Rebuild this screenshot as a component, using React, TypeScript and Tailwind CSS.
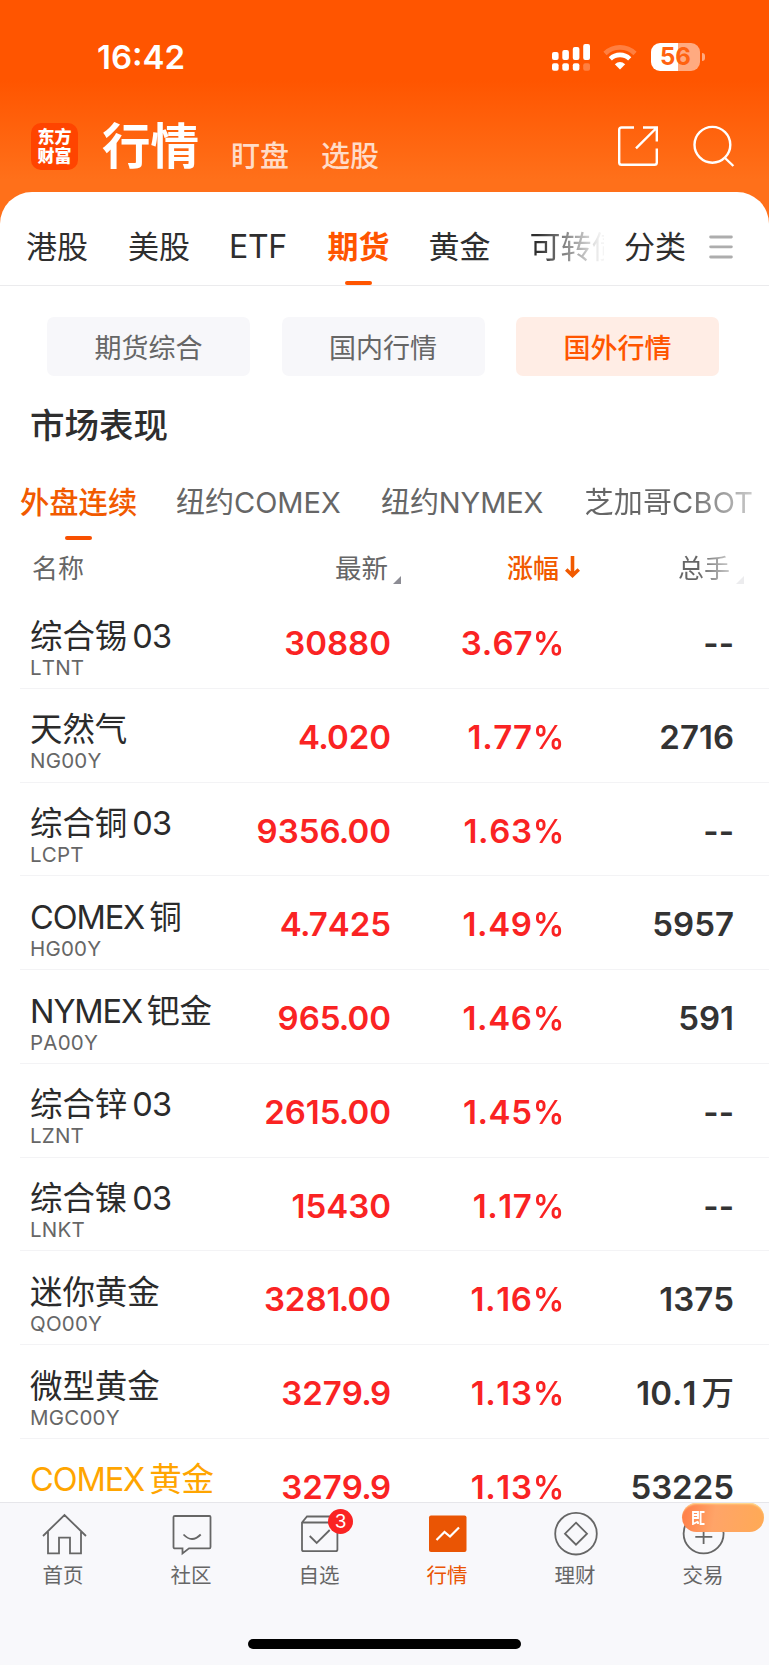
import React from "react";

const rows = [
  { name: "综合锡", tail: "03", code: "LTNT", price: "30880", pct: "3.67%", vol: "--" },
  { name: "天然气", code: "NG00Y", price: "4.020", pct: "1.77%", vol: "2716" },
  { name: "综合铜", tail: "03", code: "LCPT", price: "9356.00", pct: "1.63%", vol: "--" },
  { lead: "COMEX", name: "铜", code: "HG00Y", price: "4.7425", pct: "1.49%", vol: "5957" },
  { lead: "NYMEX", name: "钯金", code: "PA00Y", price: "965.00", pct: "1.46%", vol: "591" },
  { name: "综合锌", tail: "03", code: "LZNT", price: "2615.00", pct: "1.45%", vol: "--" },
  { name: "综合镍", tail: "03", code: "LNKT", price: "15430", pct: "1.17%", vol: "--" },
  { name: "迷你黄金", code: "QO00Y", price: "3281.00", pct: "1.16%", vol: "1375" },
  { name: "微型黄金", code: "MGC00Y", price: "3279.9", pct: "1.13%", vol: "10.1", unit: "万" },
  { lead: "COMEX", name: "黄金", price: "3279.9", pct: "1.13%", vol: "53225", held: true },
];

function StatusBar() {
  return (
    <div className="flex h-[115px] items-start pt-[37px] pl-[97px] pr-[69px]">
      <span className="w-[100px] text-[33px] leading-[40px] font-semibold text-white">16:42</span>
      <div className="ml-auto flex pt-[6px]">
        <svg className="h-[29px] w-[40px]" viewBox="0 0 40 29" fill="#fff">
          <rect x="1" y="9" width="6.6" height="8" rx="2" />
          <rect x="11.3" y="7" width="6.6" height="10" rx="2" />
          <rect x="21.8" y="4" width="6.6" height="13" rx="2" />
          <rect x="32.2" y="1" width="6.8" height="16" rx="2" />
          <rect x="1" y="20.3" width="6.6" height="7.4" rx="2" />
          <rect x="11.3" y="20.3" width="6.6" height="7.4" rx="2" />
          <rect x="21.8" y="20.3" width="6.6" height="7.4" rx="2" />
          <rect x="32.2" y="20.3" width="6.8" height="7.4" rx="2" opacity="0.25" />
        </svg>
        <svg className="ml-[12px] h-[29px] w-[34px]" viewBox="0 0 34 29" fill="none" stroke="#fff" strokeWidth="4.6">
          <path d="M2 10.5A21.5 21.5 0 0 1 32 10.5" opacity="0.25" />
          <path d="M7.3 15.8A14 14 0 0 1 26.7 15.8" />
          <path d="M11.8 21.3Q17 16.6 22.2 21.3L17 26.4Z" fill="#fff" stroke="none" />
        </svg>
        <div className="relative ml-[14px] flex h-[28px] w-[49px] items-center justify-center rounded-[9px] bg-[linear-gradient(90deg,#fff_56%,#ffaa80_56%)]">
          <span className="text-[24px] leading-[28px] font-bold text-[#ff6210]">56</span>
          <span className="absolute top-[10px] -right-[5px] h-[8px] w-[3px] rounded-r-full bg-[#ffaa80]" />
        </div>
      </div>
    </div>
  );
}

function TitleBar() {
  return (
    <div className="flex h-[77px] pl-[31px] pr-[34px]">
      <div className="mt-[8px] flex h-[47px] w-[47px] flex-col items-center justify-center rounded-[10px] bg-[#ff4400] text-[17px] leading-[19px] font-black text-white">
        <span>东方</span>
        <span>财富</span>
      </div>
      <span className="ml-[24px] w-[98px] text-[48.5px] leading-[64px] font-bold text-white">行情</span>
      <span className="ml-[31px] w-[60px] pt-[21px] text-[29px] leading-[42px] font-medium text-[#ffdcc8]">盯盘</span>
      <span className="ml-[30px] w-[60px] pt-[21px] text-[29px] leading-[42px] font-medium text-[#ffdcc8]">选股</span>
      <svg className="mt-[10px] ml-auto h-[42px] w-[42px]" viewBox="0 0 42 42" fill="none" stroke="#fff" strokeWidth="2.4">
        <path d="M17 2.5H4.5Q2.2 2.5 2.2 4.8V37.5Q2.2 39.8 4.5 39.8H37.5Q39.8 39.8 39.8 37.5V23.5" />
        <path d="M26 2.5H39.8V16.5M39.4 3L19 23.3" />
      </svg>
      <svg className="mt-[10px] ml-[34px] h-[42px] w-[42px]" viewBox="0 0 42 42" fill="none" stroke="#fff" strokeWidth="2.4">
        <circle cx="19.4" cy="19.8" r="17.9" />
        <path d="M31.5 32.5L40.4 41" />
      </svg>
    </div>
  );
}

function CategoryTabs() {
  return (
    <div className="flex h-[94px] border-b border-[#ebebed] pl-[26px] text-[31px] leading-[44px] text-[#2e2e2e]">
      <div className="flex w-[578px] overflow-hidden whitespace-nowrap pt-[33px]">
        <span className="w-[102px] shrink-0">港股</span>
        <span className="w-[101px] shrink-0">美股</span>
        <span className="w-[98.5px] shrink-0 text-[32px] tracking-[-0.3px]">ETF</span>
        <span className="flex w-[101px] shrink-0 flex-col font-bold text-[#ff5500]">
          期货
          <i className="mt-[12px] ml-[17px] h-[4px] w-[27px] rounded-full bg-[#ff5500]" />
        </span>
        <span className="w-[101px] shrink-0">黄金</span>
        <span className="shrink-0 bg-[linear-gradient(90deg,#2e2e2e_8%,#f4f4f4_76%)] bg-clip-text text-transparent">可转债</span>
      </div>
      <span className="ml-[20px] pt-[33px]">分类</span>
      <svg className="mt-[43px] ml-[23px] h-[24px] w-[24px]" viewBox="0 0 24 24" stroke="#adadad" strokeWidth="2.8" strokeLinecap="round">
        <path d="M1.6 2H22.4M1.6 11.8H22.4M1.6 22H22.4" />
      </svg>
    </div>
  );
}

function Segments() {
  return (
    <div className="mt-[31px] flex h-[59px] gap-[31.5px] pl-[47px] text-center text-[27px] leading-[63px] text-[#666]">
      <span className="w-[203px] rounded-[7px] bg-[#f7f7fa]">期货综合</span>
      <span className="w-[203px] rounded-[7px] bg-[#f7f7fa]">国内行情</span>
      <span className="w-[203px] rounded-[7px] bg-[#ffede5] font-medium text-[#ff5500]">国外行情</span>
    </div>
  );
}

function ExchangeTabs() {
  return (
    <div className="mt-[31px] flex h-[60px] whitespace-nowrap pl-[20px] text-[29px] leading-[44px] text-[#666]">
      <span className="flex w-[156px] shrink-0 flex-col text-[29.3px] font-medium text-[#f15a00]">
        外盘连续
        <i className="mt-[11px] ml-[45px] h-[4px] w-[27px] rounded-full bg-[#f85000]" />
      </span>
      <span className="w-[205px] shrink-0">纽约COMEX</span>
      <span className="w-[203.5px] shrink-0 tracking-[-0.1px]">纽约NYMEX</span>
      <span className="shrink-0 bg-[linear-gradient(90deg,#666_60%,#ccc_100%)] bg-clip-text tracking-[0.2px] text-transparent">芝加哥CBOT</span>
    </div>
  );
}

function TableHead() {
  return (
    <div className="flex h-[54px] pl-[32px] text-[26px] leading-[55px] text-[#666]">
      <span className="w-[303px]">名称</span>
      <span className="text-[26.5px]">最新</span>
      <svg className="mt-[35px] ml-[5px] h-[8px] w-[8px]" viewBox="0 0 8 8" fill="#8c8c94"><path d="M8 0V8H0Z" /></svg>
      <span className="ml-[106px] font-medium text-[#f15a00]">涨幅</span>
      <svg className="mt-[15px] ml-[6px] h-[22px] w-[15px]" viewBox="0 0 15 22" fill="none" stroke="#f15a00" strokeWidth="3.6">
        <path d="M7.5 0V19M1.2 13.5L7.5 19.5L13.8 13.5" />
      </svg>
      <span className="ml-[98px] bg-[linear-gradient(90deg,#666_40%,#ccc_100%)] bg-clip-text text-transparent">总手</span>
      <svg className="mt-[35px] ml-[6px] h-[8px] w-[8px]" viewBox="0 0 8 8" fill="#ececee"><path d="M8 0V8H0Z" /></svg>
    </div>
  );
}

function Price({ value }: { value: string }) {
  const [whole, fraction] = value.split(".");
  return (
    <span className="w-[161px] pt-[26px] text-right leading-[44px] font-semibold text-[#fa2323]">
      {whole}
      {fraction && <span className="-mx-[1.8px]">.</span>}
      {fraction}
    </span>
  );
}

function QuoteRow({ row }: { row: (typeof rows)[number] }) {
  return (
    <div className="ml-[20px] flex h-[93.75px] shrink-0 border-b border-[#f3f3f5] pl-[10px] text-[33px] whitespace-nowrap [font-kerning:none]">
      <div className={row.held ? "flex w-[200px] flex-col text-[#ffa500]" : "flex w-[200px] flex-col text-[#2b2b2b]"}>
        <span className="flex h-[63.5px] items-end gap-[5px] text-[32.5px] leading-[44px]">
          {row.lead && <span className="tracking-[-1.1px]">{row.lead}</span>}
          <span className="tracking-[-0.1px]">{row.name}</span>
          {row.tail && <span className="tracking-[-0.8px]">{row.tail}</span>}
        </span>
        {row.code && <span className="-mt-[4px] text-[20.5px] leading-[26px] tracking-[0.2px] text-[#666]">{row.code}</span>}
      </div>
      <Price value={row.price} />
      <span className={row.pct.startsWith("1") ? "w-[171.5px] pt-[26px] text-right leading-[44px] font-semibold tracking-[0.6px] text-[#fa2323]" : "w-[171.5px] pt-[26px] text-right leading-[44px] font-semibold text-[#fa2323]"}>
        {row.pct.slice(0, -1)}
        <span className="inline-block w-[30px] origin-left scale-x-[0.94] tracking-normal">%</span>
      </span>
      <span className="w-[171.5px] pt-[26px] text-right leading-[44px] font-semibold text-[#333]">
        {row.vol}
        {row.unit && <span className="ml-[5px] text-[32.5px] font-medium">{row.unit}</span>}
      </span>
    </div>
  );
}

function NavItem({ label, active, children }: { label: string; active?: boolean; children: React.ReactNode }) {
  return (
    <div className={active ? "flex w-[128px] flex-col items-center text-[#ea5504]" : "flex w-[128px] flex-col items-center text-[#666]"}>
      <svg className="mt-[8px] h-[46px] w-[46px]" viewBox="0 0 46 46" fill="none" stroke="currentColor" strokeWidth="1.8">
        {children}
      </svg>
      <span className="mt-[5px] pr-[2px] text-[20.5px] leading-[28px]">{label}</span>
    </div>
  );
}

function BottomNav() {
  return (
    <nav className="flex h-[163px] shrink-0 flex-col border-t border-[#e6e6ea] bg-[#f8f8fb]">
      <div className="flex h-[136px]">
        <NavItem label="首页">
          <path d="M2 25L23.5 4L45 25M7 21V42.4H18V26.6H29V42.4H40V21" />
        </NavItem>
        <NavItem label="社区">
          <path d="M6 5H40.5Q41.5 5 41.5 6V36Q41.5 37.4 40.3 37.4H20L13.5 42.4V37.4H6Q4.5 37.4 4.5 36V6Q4.5 5 6 5ZM14.5 23.5Q23 32.5 31.7 23.5" />
        </NavItem>
        <NavItem label="自选">
          <path d="M5 11.5L10 5.5H35.2L40.4 11.5V38.5Q40.4 40.2 38.7 40.2H6.6Q5 40.2 5 38.5ZM5 11.5H40.4M12.7 25L19.7 32L32.7 19" />
        </NavItem>
        <NavItem label="行情" active>
          <rect x="4" y="4.5" width="37.5" height="36.5" rx="2" fill="#ea5504" stroke="none" />
          <path d="M11.5 29L19.5 21L25 25.5L34 16.5" stroke="#fff" strokeWidth="2.2" />
        </NavItem>
        <NavItem label="理财">
          <circle cx="23" cy="22.7" r="20.8" />
          <path d="M23 11.7L34 22.7L23 33.7L12 22.7Z" />
        </NavItem>
        <NavItem label="交易">
          <circle cx="22.6" cy="22.4" r="20" />
          <path d="M22.6 14V33M14.3 25.8H31.3" />
        </NavItem>
      </div>
      <div className="mx-auto h-[10px] w-[273px] rounded-full bg-black" />
    </nav>
  );
}

export default function App() {
  return (
    <div className="relative flex h-[1665px] w-[769px] flex-col overflow-hidden bg-[linear-gradient(180deg,#ff5500_0px,#ff5500_80px,#ff701a_180px)] font-['Inter','Noto_Sans_CJK_SC',sans-serif]">
      <StatusBar />
      <TitleBar />
      <main className="flex min-h-0 flex-1 flex-col overflow-hidden rounded-t-[32px] bg-white">
        <CategoryTabs />
        <Segments />
        <h2 className="mt-[26px] ml-[30px] text-[34.5px] leading-[48px] font-medium text-[#2e2e2e]">市场表现</h2>
        <ExchangeTabs />
        <TableHead />
        <div className="flex min-h-0 flex-1 flex-col overflow-hidden">
          {rows.map((row, i) => (
            <QuoteRow key={i} row={row} />
          ))}
        </div>
      </main>
      <BottomNav />
      <span className="absolute top-[1508.5px] left-[328px] flex h-[25px] w-[25px] items-center justify-center rounded-full bg-[#fa2323] text-[19px] leading-[25px] text-white">3</span>
      <span className="absolute top-[1503px] left-[682px] flex h-[29px] w-[82px] items-center rounded-full bg-[linear-gradient(100deg,#ff7c45,#ffa468_40%,#ffaa55)] pl-[10px] shadow-[inset_0_2px_2px_-1px_#ffe9a0]">
        <svg className="h-[14px] w-[13px]" viewBox="0 0 13 14" fill="none" stroke="#fff" strokeWidth="1.8">
          <path d="M1 0V13L6 10.5M1 1H6V7H1M1 4H6M8.6 0V14M12.5 1H9M12.5 13H9M6 10.5V13" />
        </svg>
      </span>
    </div>
  );
}
